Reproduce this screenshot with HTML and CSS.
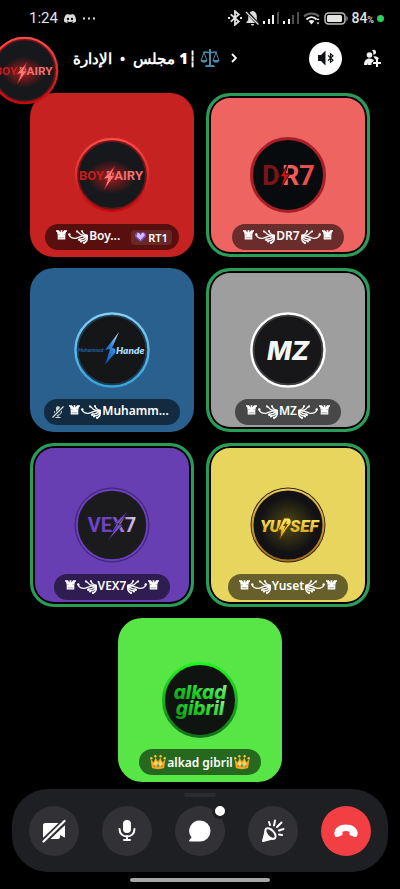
FILE: index.html
```html
<!DOCTYPE html>
<html lang="ar">
<head>
  <meta charset="UTF-8">
  <meta name="viewport" content="width=device-width, initial-scale=1.0">
  <title>مجلس 1</title>
  <link rel="stylesheet" href="styles.css">
</head>
<body>
  <!-- Shared drawings -->
  <svg class="defs" aria-hidden="true">
    <defs>
      <linearGradient id="gRedRing" x1="0" y1="0" x2="0" y2="1"><stop offset="0" stop-color="#ff4b48"/><stop offset="1" stop-color="#c20b0e"/></linearGradient>
      <linearGradient id="gDr" x1="0" x2="1"><stop offset="0" stop-color="#ee6a68"/><stop offset="1" stop-color="#ef4343"/></linearGradient>
      <linearGradient id="gBlueRing" x1="0" y1="0" x2="0" y2="1"><stop offset="0" stop-color="#86cdf3"/><stop offset="1" stop-color="#35a3dc"/></linearGradient>
      <linearGradient id="gBlue" x1="0" y1="1" x2="1" y2="0"><stop offset="0" stop-color="#0e48a0"/><stop offset=".5" stop-color="#2f83d8"/><stop offset="1" stop-color="#d5f0ff"/></linearGradient>
      <linearGradient id="gPurple" x1="0" x2="1"><stop offset="0" stop-color="#7141d2"/><stop offset=".5" stop-color="#6c45b8"/><stop offset="1" stop-color="#e3cdf7"/></linearGradient>
      <linearGradient id="gGold" x1="0" y1="0" x2="0" y2="1"><stop offset="0" stop-color="#fff16a"/><stop offset="1" stop-color="#d3990c"/></linearGradient>
      <linearGradient id="gGoldRing" x1="0" y1="0" x2="0" y2="1"><stop offset="0" stop-color="#e8c556"/><stop offset="1" stop-color="#a56c1c"/></linearGradient>
      <linearGradient id="gGreen" x1="0" y1="1" x2="1" y2="0"><stop offset="0" stop-color="#0c8a16"/><stop offset=".5" stop-color="#1fd52a"/><stop offset="1" stop-color="#a1f59b"/></linearGradient>
      <linearGradient id="gGreenRing" x1="0" y1="0" x2="0" y2="1"><stop offset="0" stop-color="#1cf51c"/><stop offset="1" stop-color="#11701a"/></linearGradient>
      <radialGradient id="gGlow"><stop offset="0" stop-color="#ff2020" stop-opacity=".6"/><stop offset="1" stop-color="#ff2020" stop-opacity="0"/></radialGradient>
      <radialGradient id="gGoldGlow"><stop offset="0" stop-color="#b49a10" stop-opacity=".4"/><stop offset="1" stop-color="#b49a10" stop-opacity="0"/></radialGradient>
    </defs>
    <symbol id="queen" viewBox="0 0 11 10">
      <path fill="currentColor" d="M0 .3h3.200v1h.8v1h.6V.3h1.800v2H7v-1h.8v-1H11v1.500h-1L9.300 5v4.600H1.700V5L1 1.800H0z"/>
      <path d="M2.600 4l.8 1.200M8.400 4l-.8 1.200M2.600 7.800h5.800" stroke="#000" stroke-opacity=".5" stroke-width=".7"/>
    </symbol>
    <symbol id="flourish" viewBox="0 0 20 14">
      <g fill="none" stroke="currentColor" stroke-width="1.400" stroke-linecap="round">
        <path d="M1.200 4.500c.5 3.500 4.600 4.600 7.800 3.300C12 6.500 14.500 5.600 19 5.600"/>
        <path d="M8.700 1.200c1.800 0 2.300 3.500 6 4 1.500.3 3 .3 4.300.3"/>
        <path d="M14 1c.4 2.300 2.500 3.700 5 4.300"/>
        <path d="M18.500 6c-2 2.500-4.500 3-7 3.300"/>
        <path d="M19 6.300c-.4 2.800-2.500 4.500-6 4.700"/>
        <path d="M19.300 6.500c.3 3-1 5.500-3.300 6.500"/>
      </g>
      <g fill="currentColor"><circle cx="1.300" cy="4.500" r="1.200"/><circle cx="9" cy="1.500" r="1.100"/><circle cx="14" cy="1.200" r="1"/><circle cx="11.200" cy="9.800" r="1.200"/><circle cx="13" cy="11.400" r="1.100"/><circle cx="16" cy="12.800" r="1.100"/></g>
    </symbol>
    <symbol id="crown" viewBox="0 0 16 16">
      <path fill="#f5a623" d="M.6 5.200l3.200 3.200 1.700-5 2.500 4.200 2.500-4.200 1.700 5 3.200-3.200-1.300 8.900c-3.600 1.400-8.600 1.400-12.200 0z"/>
      <path fill="#ffd45e" d="M3.500 9.500l2.200-3.300L8 10l2.300-3.800 2.200 3.300-.8 2.500H4.300z"/>
      <g fill="#ffc33a"><circle cx="1.300" cy="4.300" r="1.200"/><circle cx="5.400" cy="2.200" r="1.200"/><circle cx="10.600" cy="2.200" r="1.200"/><circle cx="14.700" cy="4.300" r="1.200"/></g>
      <circle cx="8" cy="11.500" r="1.300" fill="#26a08d"/><circle cx="4.200" cy="12" r=".8" fill="#d3432e"/><circle cx="11.800" cy="12" r=".8" fill="#d3432e"/>
    </symbol>
    <symbol id="boydairy" viewBox="0 0 76 76">
      <circle cx="38" cy="38" r="36" fill="#17181b" stroke="url(#gRedRing)" stroke-width="2.500"/>
      <circle cx="38" cy="38" r="34" fill="none" stroke="#e01518" stroke-opacity=".4" stroke-width="2"/>
      <ellipse cx="37" cy="40" rx="24" ry="17" fill="url(#gGlow)"/>
      <g class="logo-boy"><text x="5" y="43" fill="#cf1a1c">BOY</text><text x="32" y="43" fill="#f4706c">DAIRY</text></g>
      <path fill="#ff7a76" stroke="#851014" stroke-width=".7" d="M41 29L29 42l5-.5L30 53l11-15-4 .5z"/>
    </symbol>
    <symbol id="signal" viewBox="0 0 17 12">
      <path fill="#f2f2f2" d="M0 9h2v3H0zM5 7h2v5H5z"/>
      <path fill="#4f4f4f" d="M14 0h2v12h-2z"/>
    </symbol>
    <symbol id="bluetooth" viewBox="0 0 14 16">
      <path fill="none" stroke="currentColor" stroke-width="1.800" d="M2.800 4.300l8 7.200L7 14.800V1.200l3.800 3.300-8 7.200"/>
    </symbol>
  </svg>

  <div class="status-bar">
    <span class="clock">1:24</span>
    <svg class="st-discord" viewBox="0 0 24 18" aria-hidden="true"><path fill="#dcdcdc" d="M20.300 1.500A20 20 0 0 0 15.400 0l-.7 1.300a18 18 0 0 0-5.400 0L8.600 0a20 20 0 0 0-4.900 1.500C.6 6.100-.3 10.600.1 15a20 20 0 0 0 6 3l1.300-2-2-1 .5-.4a14 14 0 0 0 12.200 0l.5.400-2 1 1.300 2a20 20 0 0 0 6-3c.5-5.100-.8-9.600-3.600-13.500zM8 12.300c-1.200 0-2.200-1.100-2.200-2.400S6.800 7.500 8 7.500s2.200 1.100 2.200 2.400S9.200 12.300 8 12.300zm8 0c-1.200 0-2.200-1.100-2.200-2.400s1-2.400 2.200-2.400 2.200 1.100 2.200 2.400-1 2.400-2.200 2.400z"/></svg>
    <svg class="st-dots" viewBox="0 0 12 3" aria-hidden="true"><path fill="#dcdcdc" d="M0 .5h2v2H0zM5 .5h2v2H5zM10 .5h2v2h-2z"/></svg>
    <div class="status-icons">
      <svg width="14" height="16" viewBox="0 0 14 16" color="#e2e2e2"><use href="#bluetooth"/><path fill="#e2e2e2" d="M0 7h2v2H0zM12 7h2v2h-2z"/></svg>
      <svg width="15" height="16" viewBox="0 0 15 16"><path fill="#dedede" d="M7.500 1c3 .5 4.300 2.700 4.300 5.500v3.700L13.500 12v1h-12v-1l1.700-1.800V6.500C3.200 3.700 4.500 1.500 7.500 1zM6 14h3c0 2-3 2-3 0z"/><path stroke="#000" stroke-width="3" d="M1 1l13 14"/><path stroke="#dedede" stroke-width="1.300" d="M1 2l12.500 12.500"/></svg>
      <svg width="17" height="12" viewBox="0 0 17 12"><use href="#signal"/><path fill="#f2f2f2" d="M9 3h2v9H9z"/></svg>
      <svg width="17" height="12" viewBox="0 0 17 12"><use href="#signal"/><path fill="#4f4f4f" d="M9 3h2v9H9z"/></svg>
      <svg width="18" height="13" viewBox="0 0 18 13"><g fill="none" stroke-width="2"><path stroke="#666" d="M1 4.500c4-4 11-4 15 0"/><path stroke="#eee" d="M3.500 7.500c3-3 7-3 10 0"/></g><path fill="#eee" d="M5.500 9c2-1.500 4-1.500 6 0l-3 3.500zM15 6l1.500 2h-3zM15 12.500l1.500-2h-3z"/></svg>
      <svg width="24" height="13" viewBox="0 0 24 13"><rect x="1" y="1" width="20" height="11" rx="3.500" fill="none" stroke="#bdbdbd" stroke-width="1.500"/><rect x="3" y="3" width="15" height="7" rx="1.500" fill="#e4e4e4"/><path fill="#bdbdbd" d="M22.500 4c1.500.5 1.500 4.500 0 5z"/></svg>
      <span class="battery">84<small>%</small></span>
      <i class="mic-dot"></i>
    </div>
  </div>

  <header class="call-header">
    <a class="channel" href="#">
      <span class="channel-name" dir="rtl"><svg class="scales" viewBox="0 0 20 20" aria-label="⚖"><g fill="none" stroke="#4c8ca9" stroke-width="1"><path stroke-width="2" d="M10 1v16"/><path stroke-width="1.500" d="M3 4.500c3-1.500 4 .5 7 0 3 .5 4-1.500 7 0"/><path d="M4 4.500L1.200 12M4 4.500L6.800 12M16 4.500L13.200 12M16 4.500L18.800 12"/></g><path fill="#4c8ca9" d="M.5 12h7c-.5 3.500-6.500 3.500-7 0zM12.500 12h7c-.5 3.500-6.500 3.500-7 0zM5 19l1-2h8l1 2z"/></svg>┆<b>1</b> مجلس &nbsp;•&nbsp; الإدارة</span>
      <svg class="chevron" viewBox="0 0 6 10" aria-hidden="true"><path fill="none" stroke="#fff" stroke-width="1.800" d="M1 1l4 4-4 4"/></svg>
    </a>
    <button class="speaker" type="button" aria-label="Audio output">
      <svg width="18" height="16" viewBox="0 0 18 16"><path fill="#111217" d="M1 5h3l4.500-4.500v15L4 11H1z"/><path fill="none" stroke="#111217" stroke-width="1.200" d="M11 5.300l5 5-2.500 2V3.700l2.500 2-5 5"/></svg>
    </button>
    <button class="add-people" type="button" aria-label="Add people">
      <svg width="18" height="18" viewBox="0 0 18 18"><g fill="#f2f2f2"><circle cx="6.500" cy="6" r="2.800"/><path d="M1 16c0-4 2-6.500 5.500-6.500 2 0 3.500.8 4.500 2L8.500 14v2H5v-2l-.7 2z"/><path d="M9 1.500c2.500-2 5 .5 3.700 3-.6 1.200-2 1.300-2.700.7.700-1.500.4-2.800-1-3.700zM10.500 7.500c2.500-.5 4.500.3 5.500 2.500h-3.200v1z"/><path d="M13 10h2v3h3v2h-3v3h-2v-3h-3v-2h3z"/></g></svg>
    </button>
  </header>

  <!-- Floating call bubble -->
  <svg class="bubble" viewBox="0 0 76 76" role="img" aria-label="Boy Dairy"><use href="#boydairy"/></svg>

  <main class="stage">
    <section class="tile red">
      <svg class="avatar" viewBox="0 0 76 76"><use href="#boydairy"/></svg>
      <div class="name fancy"><svg class="queen"><use href="#queen"/></svg><svg class="flourish"><use href="#flourish"/></svg><span>Boy...</span>
        <span class="tag"><svg width="11" height="10" viewBox="0 0 11 10"><path fill="#7350bd" d="M2 0h2l1.500 1.500L7 0h2l2 2v3L5.500 10 0 5V2z"/><path fill="#d4bcff" d="M2.500 1h1.500l1.500 2L7 1h1.500L10 3 5.500 8 1.500 4.500z"/></svg>RT1</span>
      </div>
    </section>

    <section class="tile coral speaking">
      <svg class="avatar" viewBox="0 0 76 76">
        <circle cx="38" cy="38" r="36.500" fill="#080b0d" stroke="#a71f27" stroke-width="3"/>
        <g class="logo-dr"><text x="12" y="48" fill="#7d1418">D</text><text x="32" y="48" fill="url(#gDr)">R7</text></g>
        <path fill="#cf1216" stroke="#220405" stroke-width="1" d="M38 27l-8 13 4-.5-4 13 10-16-5 .5z"/>
      </svg>
      <div class="name fancy"><svg class="queen"><use href="#queen"/></svg><svg class="flourish"><use href="#flourish"/></svg><span>DR7</span><svg class="flourish flip"><use href="#flourish"/></svg><svg class="queen"><use href="#queen"/></svg></div>
    </section>

    <section class="tile blue">
      <svg class="avatar" viewBox="0 0 76 76">
        <circle cx="38" cy="38" r="36.500" fill="#151618" stroke="url(#gBlueRing)" stroke-width="2.500"/>
        <circle cx="38" cy="38" r="34.500" fill="none" stroke="#2b84b9" stroke-opacity=".35" stroke-width="2"/>
        <text class="logo-tiny" x="4" y="40" fill="#1f66ad">Muhammed</text>
        <path fill="url(#gBlue)" d="M45 20L31 38l5-1-5 16 10-12c1-3 0-5-3-5z"/>
        <text class="logo-small" x="42" y="42" fill="#a6dcfa">Hande</text>
      </svg>
      <div class="name fancy"><svg class="muted" viewBox="0 0 12 12"><path fill="#cfd8de" d="M4 2c0-2.500 4-2.500 4 0v3c0 2.500-4 2.500-4 0zM5.500 9h1v2h2v1h-5v-1h2z"/><path fill="none" stroke="#cfd8de" d="M2.500 5c0 5.500 7 5.500 7 0"/><path stroke="#16303f" stroke-width="3" d="M.5 11.500l11-11"/><path stroke="#cfd8de" stroke-width="1.200" d="M.5 11.500l11-11"/></svg><svg class="queen"><use href="#queen"/></svg><svg class="flourish"><use href="#flourish"/></svg><span>Muhamm...</span></div>
    </section>

    <section class="tile grey speaking">
      <svg class="avatar" viewBox="0 0 76 76">
        <circle cx="38" cy="38" r="36.500" fill="#171719" stroke="#fff" stroke-width="2.500"/>
        <circle cx="38" cy="38" r="34.500" fill="none" stroke="#777" stroke-opacity=".4" stroke-width="2"/>
        <text class="logo-mz" x="38" y="48" fill="#f5f5f5">MZ</text>
      </svg>
      <div class="name fancy"><svg class="queen"><use href="#queen"/></svg><svg class="flourish"><use href="#flourish"/></svg><span>MZ</span><svg class="flourish flip"><use href="#flourish"/></svg><svg class="queen"><use href="#queen"/></svg></div>
    </section>

    <section class="tile purple speaking">
      <svg class="avatar" viewBox="0 0 76 76">
        <circle cx="38" cy="38" r="37" fill="#5c35a5" stroke="#3c2470" stroke-width="1"/>
        <circle cx="38" cy="38" r="35" fill="#1b1b1d" stroke="#6d42c0" stroke-width="1.500"/>
        <text class="logo-vex" x="38" y="45" fill="url(#gPurple)">VEX7</text>
        <path fill="#7b4be0" stroke="#1b1b1d" stroke-width=".6" d="M55 23L40 37l5-.5-12 18 16-17-5 .5z"/>
      </svg>
      <div class="name fancy"><svg class="queen"><use href="#queen"/></svg><svg class="flourish"><use href="#flourish"/></svg><span>VEX7</span><svg class="flourish flip"><use href="#flourish"/></svg><svg class="queen"><use href="#queen"/></svg></div>
    </section>

    <section class="tile yellow speaking">
      <svg class="avatar" viewBox="0 0 76 76">
        <circle cx="38" cy="38" r="37.500" fill="#332717"/>
        <circle cx="38" cy="38" r="35.500" fill="#121214" stroke="url(#gGoldRing)" stroke-width="2"/>
        <circle cx="38" cy="38" r="28" fill="url(#gGoldGlow)"/>
        <g class="logo-gold" fill="url(#gGold)"><text x="10" y="45">YU</text><text x="40" y="45">SEF</text></g>
        <path fill="url(#gGold)" stroke="#6b4507" stroke-width="1" d="M34 31h5c4 2 2 7-1 9l-8 12 1-9h-3z"/>
        <path fill="#6b4507" d="M37 33l-4 6h2l-1 4 4-6h-2z"/>
      </svg>
      <div class="name fancy"><svg class="queen"><use href="#queen"/></svg><svg class="flourish"><use href="#flourish"/></svg><span>Yuset</span><svg class="flourish flip"><use href="#flourish"/></svg><svg class="queen"><use href="#queen"/></svg></div>
    </section>

    <section class="tile green">
      <svg class="avatar" viewBox="0 0 76 76">
        <circle cx="38" cy="38" r="36.500" fill="#101411" stroke="url(#gGreenRing)" stroke-width="3"/>
        <g class="logo-green" fill="url(#gGreen)"><text x="38" y="37">alkad</text><text x="38" y="53">gibril</text></g>
      </svg>
      <div class="name"><svg class="crown"><use href="#crown"/></svg><span>alkad gibril</span><svg class="crown"><use href="#crown"/></svg></div>
    </section>
  </main>

  <footer class="controls">
    <button type="button" aria-label="Turn on camera">
      <svg width="24" height="24" viewBox="0 0 24 24"><path fill="#fff" d="M3 4h13c1 0 2 1 2 2v3l4-3c.6-.3 1 0 1 .7v11c0 .7-.5 1-1 .6l-4-2.300V18c0 1-1 2-2 2H3c-1 0-2-1-2-2V6c0-1 1-2 2-2z"/><path stroke="#313136" stroke-width="6" d="M0 24L24 1"/><path stroke="#fff" stroke-width="2.200" stroke-linecap="round" d="M1.500 22.500L22.500 2"/></svg>
    </button>
    <button type="button" aria-label="Mute">
      <svg width="22" height="24" viewBox="0 0 22 24"><rect x="7" y="1" width="8" height="13" rx="4" fill="#fff"/><path fill="none" stroke="#fff" stroke-width="2" stroke-linecap="round" d="M3.500 10c0 10 15 10 15 0M11 17v4M8 21h6"/></svg>
    </button>
    <button class="has-badge" type="button" aria-label="Chat">
      <svg width="24" height="24" viewBox="0 0 24 24"><path fill="#fff" d="M12 1.500a10.500 10.500 0 1 1 0 21H2c-1 0-1.200-1-.6-1.600L3.500 18.500A10.500 10.500 0 0 1 12 1.500z"/></svg>
      <i class="badge"></i>
    </button>
    <button type="button" aria-label="Soundboard">
      <svg width="24" height="24" viewBox="0 0 24 24"><g fill="none" stroke="#fff" stroke-width="2" stroke-linecap="round" stroke-linejoin="round"><path fill="#fff" d="M5 10.500L2 22l11.500-3z"/><ellipse cx="9.500" cy="14.500" rx="3.500" ry="6.500" transform="rotate(-43 9.500 14.500)" fill="#313136"/><path d="M8 3l1 3M14 1.500l-1 5M20.500 3.500L16 8M18 11.500l4.500-1.500M18 15.500l3 .5"/></g></svg>
    </button>
    <button class="hangup" type="button" aria-label="Leave call">
      <svg width="24" height="14" viewBox="0 0 24 14"><path fill="#fff" d="M12 .5c5.800 0 10.500 2.700 11.500 7.500.3 1.800 0 3.300-.8 4.400-.5.600-1.200.8-2 .5l-4-1.300c-.8-.3-1.200-.9-1.200-1.700V7.700c-2-.8-5-.8-7 0v2.200c0 .8-.4 1.400-1.200 1.700l-4 1.300c-.8.3-1.500.1-2-.5-.8-1.100-1.100-2.600-.8-4.400C1.500 3.200 6.200.5 12 .5z"/></svg>
    </button>
  </footer>
  <div class="nav-bar"></div>
</body>
</html>
```
FILE: styles.css
```css
:root {
  --panel: #1e1f23;
  --button: #313136;
  --speaking: #279d57;
}
* { margin: 0; padding: 0; box-sizing: border-box; }
body {
  position: relative;
  display: flex;
  flex-direction: column;
  min-height: 100vh;
  background: #000;
  color: #fff;
  font-family: "Noto Sans", "Open Sans", sans-serif;
  overflow-x: hidden;
}
svg { display: block; flex: none; }
button { border: none; background: none; color: inherit; cursor: pointer; }
.defs { position: absolute; width: 0; height: 0; }

/* Status bar */
.status-bar {
  display: flex;
  align-items: center;
  height: 36px;
  padding: 0 16px 0 29px;
  font-family: Roboto, sans-serif;
  color: #e2e2e2;
}
.clock { font-size: 15px; margin-right: 6px; }
.st-discord { width: 12px; height: 9px; }
.st-dots { width: 12px; height: 3px; margin-left: 7px; }
.status-icons {
  display: flex;
  align-items: center;
  gap: 3px;
  margin-left: auto;
}
.battery { font-size: 14px; font-weight: 500; }
.battery small { font-size: 9px; }
.mic-dot { width: 7px; height: 7px; border-radius: 50%; background: #30cf60; }

/* Header */
.call-header {
  display: flex;
  align-items: center;
  height: 44px;
  padding: 0 19px 0 73px;
}
.channel {
  display: flex;
  align-items: center;
  gap: 11px;
  margin-right: auto;
  color: #fff;
  text-decoration: none;
  white-space: nowrap;
}
.channel-name {
  display: flex;
  align-items: center;
  font-size: 15px;
  font-weight: 600;
  white-space: pre;
}
.scales { width: 20px; height: 20px; margin-left: 3px; }
.chevron { width: 6px; height: 10px; }
.speaker {
  display: grid;
  place-items: center;
  width: 33px;
  height: 33px;
  border-radius: 50%;
  background: #fff;
  margin-right: 21px;
}
.bubble {
  position: absolute;
  top: 36px;
  left: -10px;
  width: 69px;
  height: 69px;
  z-index: 2;
}

/* Participants */
.stage {
  display: flex;
  flex-wrap: wrap;
  justify-content: center;
  gap: 11px 12px;
  padding: 13px 30px 7px;
}
.tile {
  display: grid;
  grid-template-rows: 1fr auto 1fr;
  justify-items: center;
  width: calc(50% - 6px);
  aspect-ratio: 1;
  padding: 7px;
  border-radius: 24px;
}
.tile.speaking {
  padding: 4px;
  border: 3px solid var(--speaking);
  box-shadow: inset 0 0 0 2px #000;
}
.red { background: #c52221; }
.coral { background: #ed6461; }
.blue { background: #29608e; }
.grey { background: #9e9e9e; }
.purple { background: #683fb2; }
.yellow { background: #e7d55e; }
.green { background: #58e646; }
.avatar { grid-row: 2; width: 76px; height: 76px; }
.name {
  grid-row: 3;
  align-self: end;
  display: flex;
  align-items: center;
  gap: 1px;
  height: 26px;
  padding: 0 11px;
  border-radius: 13px;
  background: rgba(0, 0, 0, 0.55);
  font-size: 12px;
  font-weight: 600;
  white-space: nowrap;
}
.fancy { padding-bottom: 4px; }
.queen { width: 11px; height: 10px; }
.flourish { width: 20px; height: 14px; margin-top: 4px; }
.flip { transform: scaleX(-1); }
.crown { width: 16px; height: 16px; }
.muted { width: 12px; height: 12px; margin: 4px 4px 0 -3px; }
.tag {
  display: flex;
  align-items: center;
  gap: 2px;
  height: 15px;
  padding: 0 4px;
  margin: 4px -4px 0 10px;
  border-radius: 4px;
  background: rgba(255, 255, 255, 0.1);
  font-size: 11px;
}

/* Avatar logos */
.logo-boy { font: bold 13px Roboto, sans-serif; }
.logo-dr { font: bold 27px Roboto, sans-serif; }
.logo-tiny { font: italic bold 5px Lato, sans-serif; }
.logo-small { font: italic 800 10px Lato, sans-serif; }
.logo-mz { font: italic 800 26px Inter, sans-serif; text-anchor: middle; }
.logo-vex { font: bold 20px Roboto, sans-serif; text-anchor: middle; }
.logo-gold { font: italic 900 17px Roboto, sans-serif; }
.logo-green { font: italic 800 19px Inter, sans-serif; text-anchor: middle; }

/* Call controls */
.controls {
  position: relative;
  display: flex;
  justify-content: space-between;
  margin: 0 12px;
  padding: 17px 17px 16px;
  border-radius: 36px;
  background: var(--panel);
}
.controls::before {
  content: "";
  position: absolute;
  top: 4px;
  left: 50%;
  width: 32px;
  height: 4px;
  margin-left: -16px;
  border-radius: 2px;
  background: #2b2c31;
}
.controls button {
  display: grid;
  place-items: center;
  width: 50px;
  height: 50px;
  border-radius: 50%;
  background: var(--button);
}
.controls .hangup { background: #f23f43; }
.has-badge { position: relative; }
.badge {
  position: absolute;
  top: -3px;
  right: -3px;
  width: 16px;
  height: 16px;
  border: 3px solid var(--panel);
  border-radius: 50%;
  background: #fff;
}
.nav-bar {
  align-self: center;
  width: 35%;
  height: 4px;
  margin: 6px 0 7px;
  border-radius: 2px;
  background: #a6a6a6;
}
```
